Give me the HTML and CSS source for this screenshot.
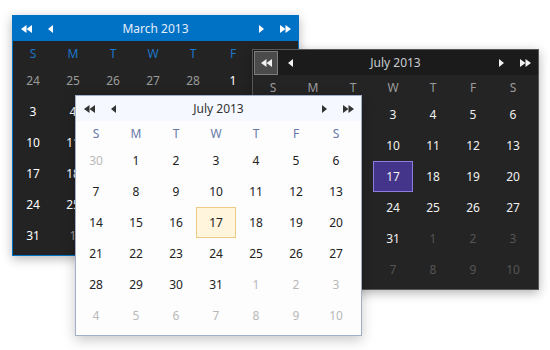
FILE: index.html
```html
<!DOCTYPE html>
<html lang="en">
  <head>
    <meta charset="UTF-8" />
    <title>Calendar Themes</title>
    <link rel="stylesheet" href="styles.css">
  </head>
  <body>
    <div class="stage">

      <!-- Blue / dark theme, March 2013 -->
      <div class="calendar theme-blue" id="cal-march">
        <div class="cal-header">
          <button class="nav-btn"><svg width="11" height="8" viewBox="0 0 11 8"><polygon points="0,4 5.5,0 5.5,8" /><polygon points="5.5,4 11,0 11,8" /></svg></button>
          <button class="nav-btn"><svg width="5" height="8" viewBox="0 0 5 8"><polygon points="0,4 5,0 5,8" /></svg></button>
          <div class="cal-title">March 2013</div>
          <button class="nav-btn"><svg width="5" height="8" viewBox="0 0 5 8"><polygon points="5,4 0,0 0,8" /></svg></button>
          <button class="nav-btn"><svg width="11" height="8" viewBox="0 0 11 8"><polygon points="5.5,4 0,0 0,8" /><polygon points="11,4 5.5,0 5.5,8" /></svg></button>
        </div>
        <div class="cal-grid">
          <div class="day-name">S</div><div class="day-name">M</div><div class="day-name">T</div><div class="day-name">W</div><div class="day-name">T</div><div class="day-name">F</div><div class="day-name">S</div>
          <div class="day other">24</div><div class="day other">25</div><div class="day other">26</div><div class="day other">27</div><div class="day other">28</div><div class="day">1</div><div class="day">2</div>
          <div class="day">3</div><div class="day">4</div><div class="day">5</div><div class="day">6</div><div class="day">7</div><div class="day">8</div><div class="day">9</div>
          <div class="day">10</div><div class="day">11</div><div class="day">12</div><div class="day">13</div><div class="day">14</div><div class="day">15</div><div class="day">16</div>
          <div class="day">17</div><div class="day">18</div><div class="day">19</div><div class="day">20</div><div class="day">21</div><div class="day">22</div><div class="day">23</div>
          <div class="day">24</div><div class="day">25</div><div class="day">26</div><div class="day">27</div><div class="day">28</div><div class="day">29</div><div class="day">30</div>
          <div class="day">31</div><div class="day other">1</div><div class="day other">2</div><div class="day other">3</div><div class="day other">4</div><div class="day other">5</div><div class="day other">6</div>
        </div>
      </div>

      <!-- Dark theme, July 2013 -->
      <div class="calendar theme-dark" id="cal-dark">
        <div class="cal-header">
          <button class="nav-btn hover"><svg width="11" height="8" viewBox="0 0 11 8"><polygon points="0,4 5.5,0 5.5,8" /><polygon points="5.5,4 11,0 11,8" /></svg></button>
          <button class="nav-btn"><svg width="5" height="8" viewBox="0 0 5 8"><polygon points="0,4 5,0 5,8" /></svg></button>
          <div class="cal-title">July 2013</div>
          <button class="nav-btn"><svg width="5" height="8" viewBox="0 0 5 8"><polygon points="5,4 0,0 0,8" /></svg></button>
          <button class="nav-btn"><svg width="11" height="8" viewBox="0 0 11 8"><polygon points="5.5,4 0,0 0,8" /><polygon points="11,4 5.5,0 5.5,8" /></svg></button>
        </div>
        <div class="cal-grid">
          <div class="day-name">S</div><div class="day-name">M</div><div class="day-name">T</div><div class="day-name">W</div><div class="day-name">T</div><div class="day-name">F</div><div class="day-name">S</div>
          <div class="day other">30</div><div class="day">1</div><div class="day">2</div><div class="day">3</div><div class="day">4</div><div class="day">5</div><div class="day">6</div>
          <div class="day">7</div><div class="day">8</div><div class="day">9</div><div class="day">10</div><div class="day">11</div><div class="day">12</div><div class="day">13</div>
          <div class="day">14</div><div class="day">15</div><div class="day">16</div><div class="day selected">17</div><div class="day">18</div><div class="day">19</div><div class="day">20</div>
          <div class="day">21</div><div class="day">22</div><div class="day">23</div><div class="day">24</div><div class="day">25</div><div class="day">26</div><div class="day">27</div>
          <div class="day">28</div><div class="day">29</div><div class="day">30</div><div class="day">31</div><div class="day other">1</div><div class="day other">2</div><div class="day other">3</div>
          <div class="day other">4</div><div class="day other">5</div><div class="day other">6</div><div class="day other">7</div><div class="day other">8</div><div class="day other">9</div><div class="day other">10</div>
        </div>
      </div>

      <!-- Light theme, July 2013 (front) -->
      <div class="calendar theme-light" id="cal-light">
        <div class="cal-header">
          <button class="nav-btn"><svg width="11" height="8" viewBox="0 0 11 8"><polygon points="0,4 5.5,0 5.5,8" /><polygon points="5.5,4 11,0 11,8" /></svg></button>
          <button class="nav-btn"><svg width="5" height="8" viewBox="0 0 5 8"><polygon points="0,4 5,0 5,8" /></svg></button>
          <div class="cal-title">July 2013</div>
          <button class="nav-btn"><svg width="5" height="8" viewBox="0 0 5 8"><polygon points="5,4 0,0 0,8" /></svg></button>
          <button class="nav-btn"><svg width="11" height="8" viewBox="0 0 11 8"><polygon points="5.5,4 0,0 0,8" /><polygon points="11,4 5.5,0 5.5,8" /></svg></button>
        </div>
        <div class="cal-grid">
          <div class="day-name">S</div><div class="day-name">M</div><div class="day-name">T</div><div class="day-name">W</div><div class="day-name">T</div><div class="day-name">F</div><div class="day-name">S</div>
          <div class="day other">30</div><div class="day">1</div><div class="day">2</div><div class="day">3</div><div class="day">4</div><div class="day">5</div><div class="day">6</div>
          <div class="day">7</div><div class="day">8</div><div class="day">9</div><div class="day">10</div><div class="day">11</div><div class="day">12</div><div class="day">13</div>
          <div class="day">14</div><div class="day">15</div><div class="day">16</div><div class="day selected">17</div><div class="day">18</div><div class="day">19</div><div class="day">20</div>
          <div class="day">21</div><div class="day">22</div><div class="day">23</div><div class="day">24</div><div class="day">25</div><div class="day">26</div><div class="day">27</div>
          <div class="day">28</div><div class="day">29</div><div class="day">30</div><div class="day">31</div><div class="day other">1</div><div class="day other">2</div><div class="day other">3</div>
          <div class="day other">4</div><div class="day other">5</div><div class="day other">6</div><div class="day other">7</div><div class="day other">8</div><div class="day other">9</div><div class="day other">10</div>
        </div>
      </div>

    </div>
  </body>
</html>
```

FILE: styles.css
```css
/* Basic reset */
body,
html {
  margin: 0;
  padding: 0;
  background-color: #ffffff;
  font-family: "Noto Sans", "Open Sans", sans-serif;
  font-size: 12px;
}

.stage {
  position: relative;
  width: 550px;
  height: 350px;
  overflow: hidden;
}

/* Each calendar is a small window on the canvas */
.calendar {
  position: absolute;
  width: 285px;
  border: 1px solid;
}

#cal-march {
  left: 12px;
  top: 15px;
}

#cal-dark {
  left: 252px;
  top: 49px;
}

#cal-light {
  left: 75px;
  top: 95px;
}

/* Header with the four nav buttons and month title */
.cal-header {
  display: flex;
  align-items: flex-start;
  height: 25px;
  padding: 1px 1px 0;
  box-sizing: border-box;
}

.nav-btn {
  width: 24px;
  height: 24px;
  padding: 0;
  border: 1px solid transparent;
  background: none;
  color: inherit;
  display: flex;
  justify-content: center;
  align-items: center;
  box-sizing: border-box;
}

.nav-btn svg {
  fill: currentColor;
  display: block;
}

.cal-title {
  flex: 1;
  text-align: center;
  line-height: 24px;
}

/* Day grid */
.cal-grid {
  display: grid;
  grid-template-columns: repeat(7, 40px);
  grid-template-rows: 24px repeat(6, 31px);
  padding: 0 5px 4px 0;
}

.day-name,
.day {
  display: flex;
  justify-content: center;
  align-items: center;
  box-sizing: border-box;
}

/* Blue theme */
.theme-blue {
  border-color: #0072c6;
  background-color: #232323;
  box-shadow: 0 3px 10px rgba(0, 0, 0, 0.28);
}

.theme-blue .cal-header {
  background-color: #0072c6;
  color: #ffffff;
}

.theme-blue .cal-title {
  color: #e4eefa;
}

.theme-blue .day-name {
  color: #1b76c8;
}

.theme-blue .day {
  color: #ffffff;
}

.theme-blue .day.other {
  color: #9a9a9a;
}

/* Dark theme */
.theme-dark {
  border-color: #575757;
  background-color: #242424;
  box-shadow: 0 3px 10px rgba(0, 0, 0, 0.3);
}

.theme-dark .cal-header {
  background-color: #1b1b1b;
  color: #f2f2f2;
}

.theme-dark .cal-title {
  color: #c9ccd2;
}

.theme-dark .nav-btn.hover {
  background-color: #4b4b4b;
  border-color: #7c7c7c;
}

.theme-dark .day-name {
  color: #9c9c9c;
}

.theme-dark .day {
  color: #f0f0f0;
}

.theme-dark .day.other {
  color: #555555;
}

.theme-dark .day.selected {
  background-color: #44348a;
  border: 1px solid #8c7de0;
}

/* Light theme */
.theme-light {
  border-color: #a2afc9;
  background-color: #fdfdfd;
  box-shadow: 0 4px 12px rgba(0, 0, 0, 0.22);
}

.theme-light .cal-header {
  background-color: #f5f8fe;
  color: #333333;
}

.theme-light .cal-title {
  color: #333333;
}

.theme-light .day-name {
  color: #6678a8;
}

.theme-light .day {
  color: #222222;
}

.theme-light .day.other {
  color: #b9b9b9;
}

.theme-light .day.selected {
  background-color: #fff5dc;
  border: 1px solid #f0cb84;
}
```
